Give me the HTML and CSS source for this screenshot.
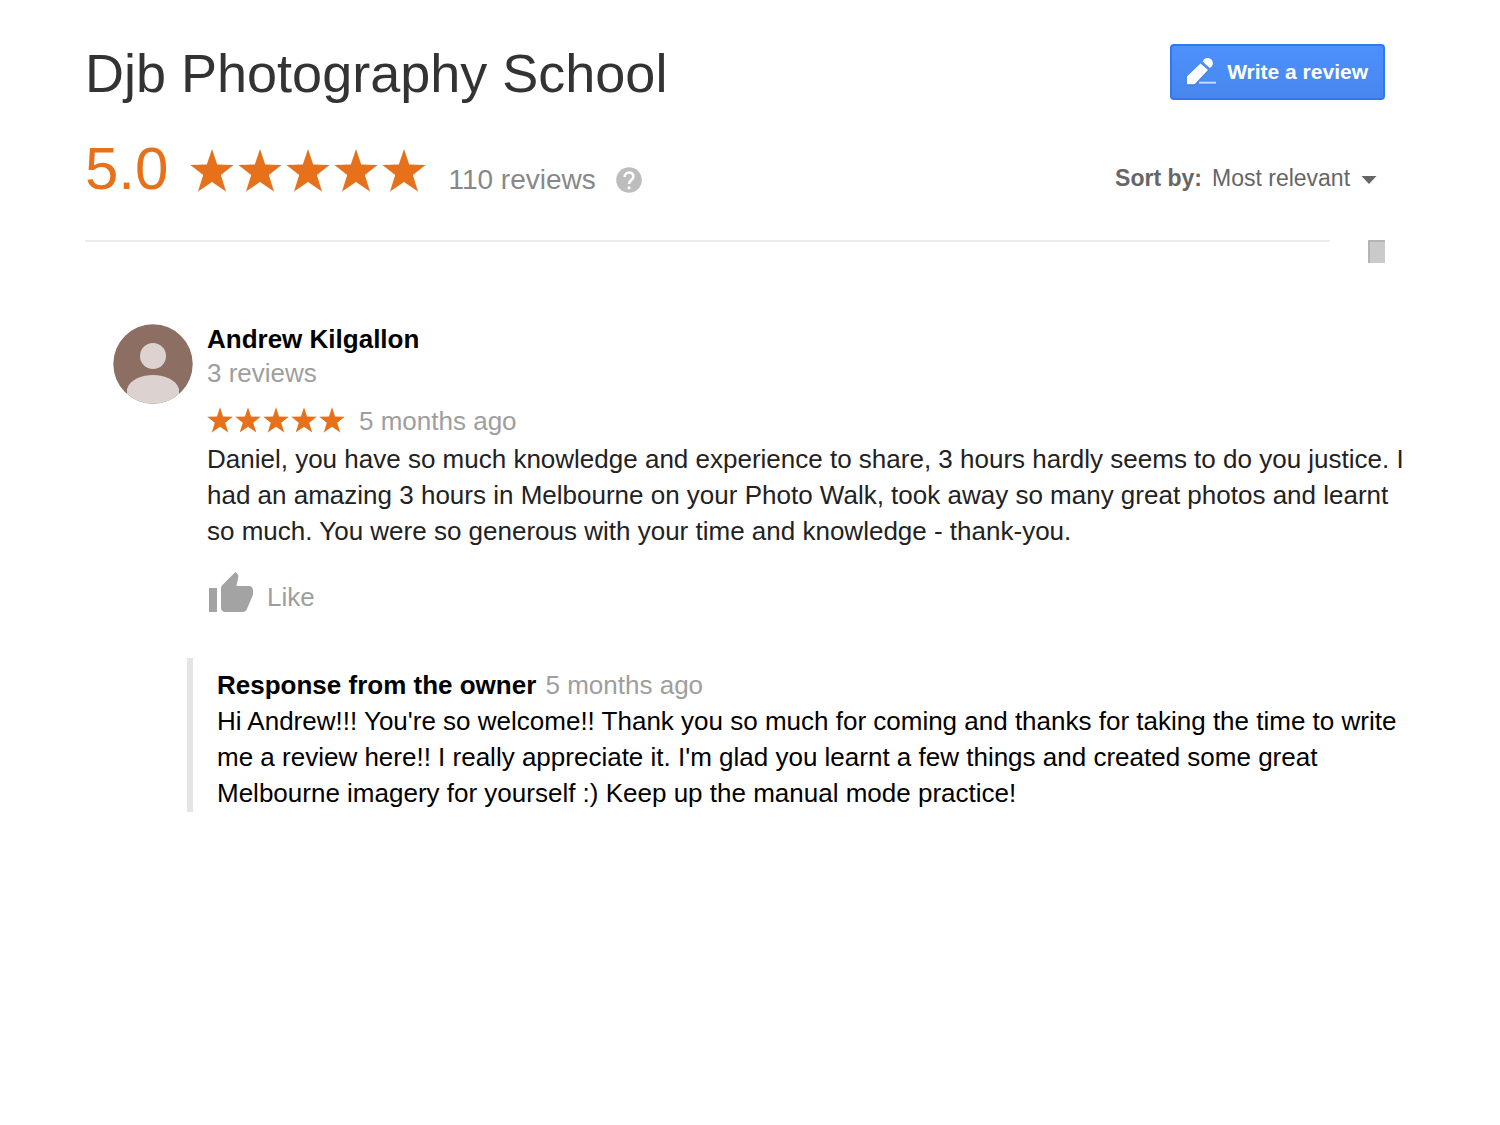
FILE: index.html
```
<!DOCTYPE html>
<html lang="en">
<head>
	<meta charset="UTF-8">
	<meta name="viewport" content="width=device-width, initial-scale=1.0">
	<title>Djb Photography School - Reviews</title>
	<link rel="stylesheet" href="styles.css">
</head>
<body>
	<!-- shared star shape -->
	<svg class="defs" aria-hidden="true">
		<symbol id="star" viewBox="0 0 44 43">
			<path d="M22 0 L27.2 15.6 L43.6 16 L30.8 26 L36 42.6 L22 33 L8 42.6 L13.2 26 L0.4 16 L16.8 15.6 Z"/>
		</symbol>
	</svg>

	<header class="header">
		<div class="title-row">
			<h1>Djb Photography School</h1>
			<button type="button" class="write-btn">
				<svg class="pencil" viewBox="0 0 30 26" aria-hidden="true">
					<path d="M0 26.500 V18.500 L13 6 L21 12 L7.700 26.500 Z" fill="#2f62c4" opacity=".5"/>
					<path d="M13 25 H29" stroke="#2f62c4" stroke-width="1" opacity=".5"/>
					<path d="M0 25.300 V17.500 L13.500 4.500 L21 11 L7.700 25.300 Z" fill="#fff"/>
					<path d="M15.800 2.800 C16.500 -1.500 22 -2 24.500 0.800 C27 3.500 26 7.500 22.800 9 Z" fill="#fff"/>
					<path d="M12 23.700 H29" stroke="#c5d9fb" stroke-width="2"/>
				</svg>
				Write a review
			</button>
		</div>
		<div class="rating-row">
			<span class="score">5.0</span>
			<span class="stars stars-big" role="img" aria-label="5 out of 5 stars">
				<svg><use href="#star"/></svg>
				<svg><use href="#star"/></svg>
				<svg><use href="#star"/></svg>
				<svg><use href="#star"/></svg>
				<svg><use href="#star"/></svg>
			</span>
			<span class="count">110 reviews</span>
			<svg class="help" viewBox="0 0 26 26" role="img" aria-label="Help">
				<circle cx="13" cy="13" r="12.800" fill="#bdbdbd"/>
				<path d="M8.600 10 C8.600 4 17.400 4 17.400 9.800 C17.400 13 13 13.200 13 17" fill="none" stroke="#fff" stroke-width="2.600"/>
				<circle cx="13" cy="20.800" r="1.600" fill="#fff"/>
			</svg>
			<div class="sort">
				<label for="sort">Sort by:</label>
				<select id="sort">
					<option>Most relevant</option>
				</select>
				<svg class="arrow" viewBox="0 0 16 8" aria-hidden="true"><path d="M0.500 0 H15.500 L8 8 Z"/></svg>
			</div>
		</div>
		<div class="divider">
			<hr>
			<div class="scroll-corner"></div>
		</div>
	</header>

	<main>
		<article class="review">
			<svg class="avatar" viewBox="0 0 80 80" role="img" aria-label="Andrew Kilgallon">
				<clipPath id="round"><circle cx="40" cy="40" r="39.700"/></clipPath>
				<g clip-path="url(#round)">
					<rect width="80" height="80" fill="#8d6e63"/>
					<circle cx="40" cy="32" r="13" fill="#dcd3d0"/>
					<path d="M14 80 V65 C17 55 30 51 40 51 C50 51 63 55 66 65 V80 Z" fill="#dcd3d0"/>
				</g>
			</svg>
			<div class="content">
				<h2>Andrew Kilgallon</h2>
				<p class="muted">3 reviews</p>
				<div class="meta">
					<span class="stars stars-small" role="img" aria-label="5 out of 5 stars">
						<svg><use href="#star"/></svg>
						<svg><use href="#star"/></svg>
						<svg><use href="#star"/></svg>
						<svg><use href="#star"/></svg>
						<svg><use href="#star"/></svg>
					</span>
					<span class="muted">5 months ago</span>
				</div>
				<p class="text">Daniel, you have so much knowledge and experience to share, 3 hours hardly seems to do you justice. I had an amazing 3 hours in Melbourne on your Photo Walk, took away so many great photos and learnt so much. You were so generous with your time and knowledge - thank-you.</p>
				<button type="button" class="like">
					<svg viewBox="0 0 44 40" aria-hidden="true">
						<path d="M0 16 H8 V40 H0 Z M44 18 C44 15.800 42.200 14 40 14 H27.400 L29.300 4.900 L29.400 4.200 C29.400 3.400 29 2.700 28.500 2.100 L26.400 0 L13.200 13.200 C12.400 13.900 12 14.900 12 16 V36 C12 38.200 13.800 40 16 40 H34 C35.700 40 37.100 39 37.700 37.600 L43.700 23.500 C43.900 23 44 22.500 44 22 Z"/>
					</svg>
					Like
				</button>
			</div>
		</article>
		<section class="response">
			<h2>Response from the owner</h2> <span class="muted">5 months ago</span>
			<p>Hi Andrew!!! You're so welcome!! Thank you so much for coming and thanks for taking the time to write me a review here!! I really appreciate it. I'm glad you learnt a few things and created some great Melbourne imagery for yourself :) Keep up the manual mode practice!</p>
		</section>
	</main>
</body>
</html>
```
FILE: styles.css
```
*, *:before, *:after {
	box-sizing: border-box;
}
body {
	margin: 0;
	background: #fff;
	color: #000;
	font-family: "Liberation Sans", Arial, sans-serif;
	font-size: 26px;
	line-height: 36px;
}
h1, h2, p {
	margin: 0;
}
h2 {
	font-size: 26px;
	font-weight: bold;
}
button {
	font-family: inherit;
	cursor: pointer;
}
.defs {
	display: none;
}
.muted {
	color: #9e9e9e;
}

/* header */
.header {
	padding: 44px 115px 0 85px;
}
.title-row {
	display: flex;
	justify-content: space-between;
	align-items: flex-start;
}
h1 {
	color: #333;
	font-size: 54px;
	font-weight: normal;
	line-height: 58px;
}
.write-btn {
	display: flex;
	align-items: center;
	gap: 10px;
	height: 56px;
	padding: 0 15px;
	border: 2px solid #3079ed;
	border-radius: 4px;
	background: linear-gradient(#4d90fe, #4787ed);
	color: #fff;
	font-size: 21px;
	font-weight: bold;
}
.pencil {
	width: 30px;
	height: 26px;
	overflow: visible;
}
.rating-row {
	display: flex;
	align-items: center;
	height: 60px;
	margin-top: 38px;
}
.score {
	padding-bottom: 2px;
	color: #e7711b;
	font-size: 60px;
	line-height: 60px;
}
.stars {
	display: flex;
	fill: #e7711b;
}
.stars-big {
	gap: 4px;
	margin: 0 22px;
}
.stars-big svg {
	width: 44px;
	height: 43px;
}
.count {
	margin-top: 20px;
	color: #888;
	font-size: 28px;
}
.help {
	width: 26px;
	height: 26px;
	margin: 20px 0 0 20px;
}
.sort {
	display: flex;
	align-items: center;
	gap: 10px;
	margin: 16px 8px 0 auto;
	color: #666;
	font-size: 23px;
}
.sort label {
	font-weight: bold;
}
.sort select {
	appearance: none;
	padding: 0;
	border: 0;
	background: none;
	color: #666;
	font: inherit;
}
.arrow {
	width: 16px;
	height: 8px;
	margin-top: 4px;
	fill: #666;
}
.divider {
	display: flex;
	align-items: flex-start;
	gap: 38px;
	margin-top: 40px;
}
.divider hr {
	flex: 1;
	margin: 0;
	border: 0;
	border-top: 2px solid #ebebeb;
}
.scroll-corner {
	width: 17px;
	height: 23px;
	border-top: 2px solid #b4b4b4;
	border-left: 2px solid #b4b4b4;
	background: #cacaca;
}

/* review */
main {
	padding: 59px 90px 40px 113px;
}
.review {
	display: flex;
	gap: 14px;
}
.avatar {
	flex: none;
	width: 80px;
	height: 80px;
	margin-top: 2px;
}
.content h2,
.content .muted {
	line-height: 34px;
}
.meta {
	display: flex;
	align-items: center;
	gap: 14px;
	margin: 14px 0 3px;
}
.stars-small {
	gap: 2px;
	padding-bottom: 2px;
}
.stars-small svg {
	width: 26px;
	height: 26px;
}
.text {
	color: #222;
}
.like {
	display: flex;
	align-items: flex-end;
	gap: 14px;
	margin-top: 23px;
	padding: 0 2px;
	border: 0;
	background: none;
	color: #9e9e9e;
	font-size: 26px;
	line-height: 30px;
}
.like svg {
	width: 44px;
	height: 40px;
	fill: #a3a3a3;
}

/* owner response */
.response {
	margin: 46px 0 0 74px;
	padding: 9px 0 1px 24px;
	border-left: 6px solid #e4e4e4;
}
.response h2 {
	display: inline;
	margin-right: 2px;
}
```
